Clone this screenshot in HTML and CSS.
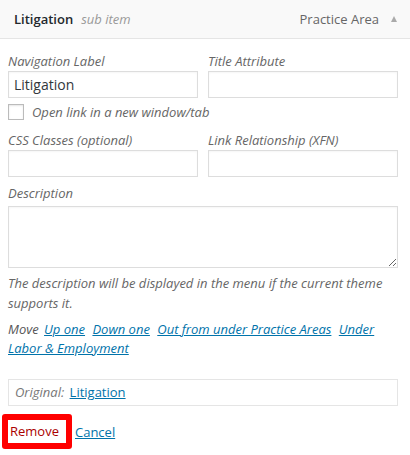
FILE: index.html
```html
<!DOCTYPE html>
<html lang="en">
  <head>
    <meta charset="utf-8" />
    <link rel="stylesheet" href="styles.css">
  </head>

  <body>
    <div class="menuItem">
      <div class="itemBar">
        <span class="itemTitle">Litigation</span>
        <span class="isSubmenu">sub item</span>
        <span class="itemType">Practice Area</span>
        <span class="toggle"></span>
      </div>

      <div class="itemSettings">
        <div class="row">
          <label class="field">
            <span class="fieldLabel">Navigation Label</span>
            <input type="text" value="Litigation" />
          </label>
          <label class="field">
            <span class="fieldLabel">Title Attribute</span>
            <input type="text" />
          </label>
        </div>

        <label class="checkRow">
          <span class="box"></span>
          <span class="fieldLabel">Open link in a new window/tab</span>
        </label>

        <div class="row second">
          <label class="field">
            <span class="fieldLabel">CSS Classes (optional)</span>
            <input type="text" />
          </label>
          <label class="field">
            <span class="fieldLabel">Link Relationship (XFN)</span>
            <input type="text" />
          </label>
        </div>

        <label class="field wide">
          <span class="fieldLabel">Description</span>
          <textarea></textarea>
        </label>
        <p class="help">The description will be displayed in the menu if the current theme supports it.</p>

        <p class="move">Move <a href="#">Up one</a> <a href="#">Down one</a> <a href="#">Out from under Practice Areas</a> <a href="#">Under Labor &amp; Employment</a></p>

        <div class="original">
          <span class="origLabel">Original:</span> <a href="#">Litigation</a>
        </div>

        <div class="actions">
          <span class="highlight"><a class="remove" href="#">Remove</a></span>
          <a class="cancel" href="#">Cancel</a>
        </div>
      </div>
    </div>
  </body>
</html>
```

FILE: styles.css
```css
body {
  margin: 0;
  background: #fff;
  font-family: "Open Sans", "Liberation Sans", sans-serif;
  font-size: 13px;
  color: #444;
}
a {
  color: #0073aa;
}

.itemBar {
  display: flex;
  align-items: center;
  height: 38px;
  padding: 0 12px 0 14px;
  background: #f9f9f9;
  border-bottom: 1px solid #e5e5e5;
}
.itemTitle {
  font-weight: 600;
  color: #23282d;
}
.isSubmenu {
  margin-left: 8px;
  font-style: italic;
  color: #999;
}
.itemType {
  margin-left: auto;
  color: #666;
}
.toggle {
  margin-left: 12px;
  margin-right: 1px;
  border-left: 3.5px solid transparent;
  border-right: 3.5px solid transparent;
  border-bottom: 6px solid #aaa;
}

.itemSettings {
  padding: 13px 12px 0 8px;
}
.row {
  display: flex;
  gap: 10px;
}
.field {
  display: flex;
  flex-direction: column;
  flex: 1;
}
.fieldLabel {
  font-style: italic;
  color: #666;
  line-height: 19px;
}
input, textarea {
  box-sizing: border-box;
  margin: 0;
  border: 1px solid #ddd;
  box-shadow: inset 0 1px 2px rgba(0, 0, 0, 0.04);
  font-family: inherit;
  color: #32373c;
}
input {
  height: 27px;
  padding: 0 5px;
  font-size: 14px;
}
textarea {
  height: 62px;
  margin-top: 3px;
}

.checkRow {
  display: flex;
  align-items: center;
  gap: 8px;
  margin-top: 4px;
  height: 20px;
}
.box {
  width: 14px;
  height: 14px;
  border: 1px solid #bbb;
  box-shadow: inset 0 1px 2px rgba(0, 0, 0, 0.1);
}
.second {
  margin-top: 9px;
}
.wide {
  margin-top: 7px;
}

.help {
  margin: 5px 0 0;
  font-style: italic;
  color: #666;
  line-height: 20px;
}
.move {
  margin: 7px 0 0;
  font-style: italic;
  color: #555;
  line-height: 19px;
}
.move a {
  margin: 0 2px;
}

.original {
  box-sizing: border-box;
  height: 27px;
  margin-top: 21px;
  padding: 0 6px;
  border: 1px solid #e5e5e5;
  line-height: 25px;
}
.origLabel {
  font-style: italic;
  color: #777;
  margin-right: 2px;
}

.actions {
  display: flex;
  align-items: center;
  margin-top: 8px;
}
.highlight {
  margin-left: -6px;
  padding: 0 7px 0 2px;
  line-height: 23px;
  border: 6px solid #f00;
  border-radius: 3px;
}
.remove {
  color: #a00;
  text-decoration: none;
}
.cancel {
  margin-left: 3px;
}
```
